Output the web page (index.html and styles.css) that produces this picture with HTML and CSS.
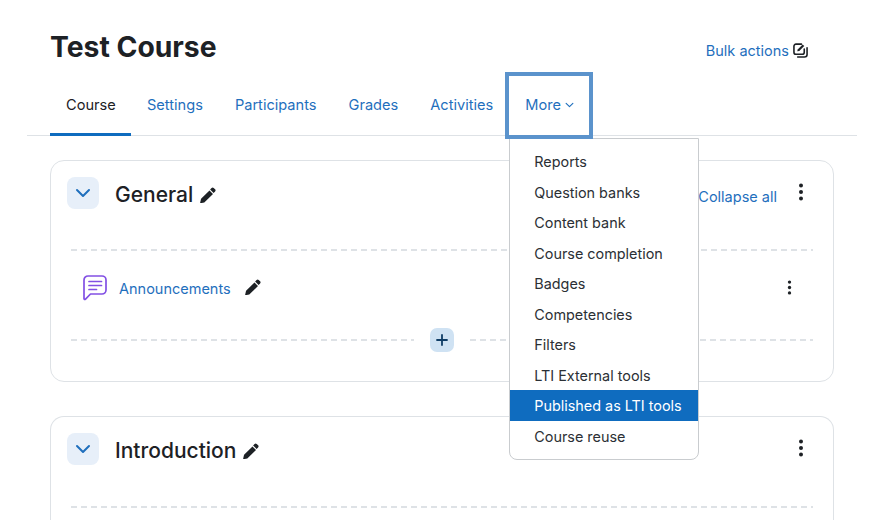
FILE: index.html
```html
<!DOCTYPE html>
<html lang="en">
<head>
<meta charset="utf-8">
<title>Test Course</title>
<link rel="stylesheet" href="styles.css">
</head>
<body>
<svg class="defs" width="0" height="0" aria-hidden="true">
  <symbol id="pencil" viewBox="0 0 16 16">
    <path d="M11.6.9a1.500 1.500 0 0 1 2.100 0l1.400 1.400a1.500 1.500 0 0 1 0 2.100l-1.500 1.500-3.500-3.500zM9.500 3.400 13 6.900l-8.200 8.200a1 1 0 0 1-.5.3l-3.500.8a.5.5 0 0 1-.6-.6l.8-3.500a1 1 0 0 1 .3-.5z" fill="currentColor"/>
  </symbol>
  <symbol id="dots" viewBox="0 0 6 18">
    <circle cx="3" cy="2.500" r="2" fill="currentColor"/><circle cx="3" cy="9" r="2" fill="currentColor"/><circle cx="3" cy="15.500" r="2" fill="currentColor"/>
  </symbol>
  <symbol id="chev" viewBox="0 0 16 10">
    <path d="M2 2l6 6 6-6" fill="none" stroke="currentColor" stroke-width="2" stroke-linecap="round" stroke-linejoin="round"/>
  </symbol>
</svg>
<div class="page">
  <header class="head">
    <h1 class="title">Test Course</h1>
    <a class="bulk">Bulk actions
      <svg class="bulk-icon" viewBox="0 0 16 16"><path d="M9 1.200H3.200A2.200 2.200 0 0 0 1 3.400v6.400A2.200 2.200 0 0 0 3.200 12h6.600A2.200 2.200 0 0 0 12 9.800V6.500" fill="none" stroke="currentColor" stroke-width="1.700" stroke-linecap="round"/><path d="M15 5v7.300a2.700 2.700 0 0 1-2.700 2.700H5" fill="none" stroke="currentColor" stroke-width="1.700" stroke-linecap="round"/><path d="M4.500 8.800 5 6.800 10.300 1.500l1.700 1.700L6.700 8.500z" fill="currentColor"/></svg>
    </a>
  </header>
  <nav class="tabs">
    <a class="tab active">Course</a>
    <a class="tab">Settings</a>
    <a class="tab">Participants</a>
    <a class="tab">Grades</a>
    <a class="tab">Activities</a>
    <div class="more-wrap">
      <a class="tab more">More <svg class="more-chev"><use href="#chev"/></svg></a>
      <ul class="menu">
        <li class="item">Reports</li>
        <li class="item">Question banks</li>
        <li class="item">Content bank</li>
        <li class="item">Course completion</li>
        <li class="item">Badges</li>
        <li class="item">Competencies</li>
        <li class="item">Filters</li>
        <li class="item">LTI External tools</li>
        <li class="item selected">Published as LTI tools</li>
        <li class="item">Course reuse</li>
      </ul>
    </div>
  </nav>
  <main class="sections">
    <section class="card">
      <div class="card-head">
        <span class="toggle"><svg class="toggle-chev"><use href="#chev"/></svg></span>
        <h2 class="sec-title">General</h2>
        <svg class="pencil"><use href="#pencil"/></svg>
        <a class="collapse">Collapse all</a>
        <svg class="dots"><use href="#dots"/></svg>
      </div>
      <div class="dash"></div>
      <div class="activity">
        <svg class="forum" viewBox="0 0 24 26"><path d="M5 1h14a4 4 0 0 1 4 4v10a4 4 0 0 1-4 4H7.500L2.300 24.300A.8.800 0 0 1 1 23.700V5a4 4 0 0 1 4-4z" fill="none" stroke="currentColor" stroke-width="1.700" stroke-linejoin="round"/><path d="M6 6.500h12.500M6 10.500h12.500M6 14.500h7.500" fill="none" stroke="currentColor" stroke-width="1.700" stroke-linecap="round"/></svg>
        <a class="act-link">Announcements</a>
        <svg class="pencil act-pencil"><use href="#pencil"/></svg>
        <svg class="dots act-dots"><use href="#dots"/></svg>
      </div>
      <div class="add-row">
        <div class="dash grow"></div>
        <span class="add">
          <svg class="plus" viewBox="0 0 12 12"><path d="M6 1v10M1 6h10" stroke="currentColor" stroke-width="1.800" stroke-linecap="round"/></svg>
        </span>
        <div class="dash grow"></div>
      </div>
    </section>
    <section class="card card-tall">
      <div class="card-head">
        <span class="toggle"><svg class="toggle-chev"><use href="#chev"/></svg></span>
        <h2 class="sec-title">Introduction</h2>
        <svg class="pencil"><use href="#pencil"/></svg>
        <svg class="dots dots-end"><use href="#dots"/></svg>
      </div>
      <div class="dash"></div>
    </section>
  </main>
</div>
</body>
</html>
```
FILE: styles.css
```css
* { box-sizing: border-box; }
html, body { margin: 0; height: 100%; overflow: hidden; }
body { background: #fff; color: #1d2125; font-family: Inter, "Liberation Sans", sans-serif; font-size: 14.5px; }
.defs { position: absolute; }
a { color: #1f6fbd; text-decoration: none; }
.page { display: flex; flex-direction: column; width: 830px; height: 100%; margin-left: 27px; }
.head { display: flex; align-items: center; justify-content: space-between; height: 76px; flex: none; padding: 20px 49px 0 23px; }
.title { margin: 0 0 3px; font-size: 28.300px; font-weight: 700; line-height: 36px; }
.bulk { display: flex; align-items: center; gap: 4px; margin-top: 5px; }
.bulk-icon { width: 15px; height: 15px; color: #1d2125; }
.tabs { display: flex; height: 60px; flex: none; padding-left: 23px; border-bottom: 1px solid #dee2e6; font-size: 14.600px; }
.tab { display: flex; align-items: center; gap: 5px; height: 60px; padding: 0 16px 2px; white-space: nowrap; }
.tab.active { width: 81px; color: #1d2125; border-bottom: 3px solid #0f6cbf; padding-bottom: 0; }
.more-wrap { position: relative; }
.more { height: 67px; width: 88px; gap: 4px; margin: -4px -4px 0; padding: 0 0 1px 16px; border: 4px solid #5b93cc; position: relative; z-index: 3; }
.more-chev { width: 9px; height: 6px; color: #1f6fbd; }
.menu { position: absolute; z-index: 2; left: 0; top: 62px; width: 190px; margin: 0; padding: 7px 0 8px; list-style: none; background: #fff; border: 1px solid #c9cccf; border-radius: 0 0 8px 8px; font-size: 14.400px; }
.item { height: 30.500px; line-height: 32px; padding-left: 24px; white-space: nowrap; color: #2b3035; }
.item.selected { background: #0f6cbf; color: #fff; }
.sections { display: flex; flex-direction: column; flex: 1; gap: 34px; margin: 24px 23px 0; }
.card { border: 1px solid #dee2e6; border-radius: 14px; padding: 16px 20px 0; }
.card-tall { flex: 1; border-bottom: 0; border-radius: 14px 14px 0 0; }
.card-head { display: flex; align-items: center; height: 32px; margin: 0 -1px 0 -4px; }
.toggle { display: flex; align-items: center; justify-content: center; width: 32px; height: 32px; border-radius: 8px; background: #e7eff9; }
.toggle-chev { width: 16px; height: 10px; color: #1f6fbd; }
.sec-title { margin: 3px 7px 0 16px; font-size: 21px; font-weight: 500; line-height: 32px; }
.pencil { width: 16px; height: 16px; color: #1d2125; margin-top: 4px; }
.collapse { margin-left: auto; margin-right: 21px; margin-top: 7px; font-size: 14.500px; }
.dots { width: 6px; height: 18px; color: #1d2125; margin-top: -2px; }
.dots-end { margin-left: auto; }
.card-head .dots { margin-right: 10px; }
.dash { height: 2px; background: repeating-linear-gradient(90deg, #dee2e6 0 6px, transparent 6px 10px); }
.card-head + .dash { margin-top: 40px; }
.card-tall .card-head + .dash { margin-top: 41px; }
.activity { display: flex; align-items: center; height: 26px; margin-top: 24px; padding-left: 12px; }
.forum { width: 24px; height: 26px; color: #8250e4; flex: none; }
.act-link { margin-left: 12px; font-size: 14.500px; }
.act-pencil { margin: -2px 0 0 14px; }
.act-dots { width: 5px; height: 15px; margin: -2px 21px 0 auto; }
.add-row { display: flex; align-items: center; gap: 16px; margin-top: 27px; padding-bottom: 29px; }
.grow { flex: 1; }
.add { display: flex; align-items: center; justify-content: center; width: 24px; height: 24px; border-radius: 7px; background: #cfe2f3; color: #0f3d66; }
.plus { width: 12px; height: 12px; }
```
